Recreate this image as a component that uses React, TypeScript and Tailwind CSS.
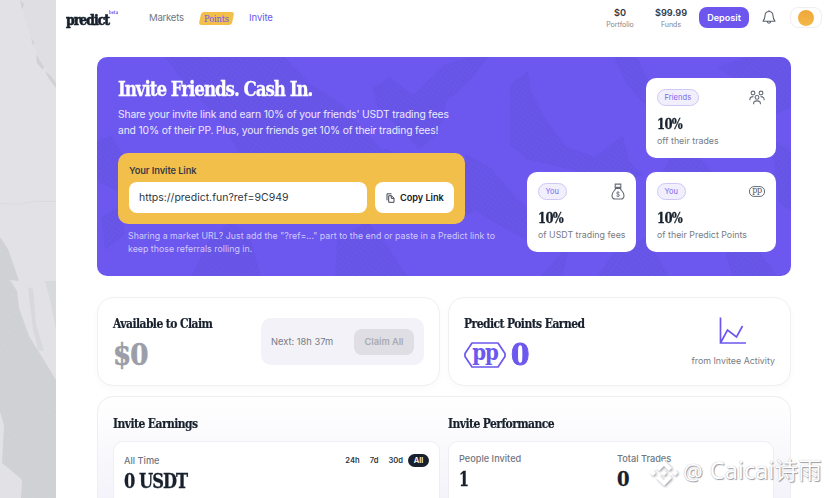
import type { ReactNode } from 'react'

const serif = "inline-block whitespace-nowrap font-bold font-['DejaVu_Serif','Liberation_Serif',serif] [font-stretch:condensed]"

function Logo() {
  return (
    <div className="relative w-[83px] h-[22px]">
      <span className={`${serif} block origin-left scale-x-[0.99] text-[14px] leading-[18px] tracking-[-1px] text-[#17202c] [-webkit-text-stroke:0.6px_#17202c]`}>
        predict
      </span>
      <span className={`${serif} absolute left-[43px] top-px origin-left scale-x-[0.85] text-[5px] leading-[8px] text-[#6c58ee]`}>
        beta
      </span>
    </div>
  )
}

function Header() {
  return (
    <header className="flex h-[57px] items-start pl-[10px] pr-[7px] pt-[7px]">
      <Logo />
      <nav className="flex h-[22px] items-center text-[9.6px] text-[#717680]">
        <span className="w-[51px] tracking-[-0.25px]">Markets</span>
        <span className="relative flex h-[13px] w-[33px] items-center justify-center">
          <span className="absolute inset-0 -skew-x-12 rounded-[3px] bg-[#f3bf4b]" />
          <span className={`${serif} relative text-[9.3px] font-normal leading-[13px] tracking-[-0.2px] text-[#6c58ee]`}>Points</span>
        </span>
        <span className="ml-[16px] tracking-[-0.1px] text-[#6c58ee]">Invite</span>
      </nav>
      <div className="ml-auto flex">
        <div className="w-[40px] text-center">
          <div className="text-[9.2px] font-semibold leading-[12px] text-[#303744]">$0</div>
          <div className="text-[7px] leading-[11px] text-[#81858d]">Portfolio</div>
        </div>
        <div className="ml-[11px] w-[40px] text-center">
          <div className="text-[9.2px] font-semibold leading-[12px] text-[#303744]">$99.99</div>
          <div className="text-[7px] leading-[11px] text-[#81858d]">Funds</div>
        </div>
        <button className="ml-[8px] h-[21px] w-[50px] rounded-[8px] bg-[#6c56ee] pt-px text-[9.1px] font-semibold text-white">
          Deposit
        </button>
        <svg className="ml-[13px] mt-[3px]" width="14" height="15" viewBox="0 0 14 15" fill="none" stroke="#5a606c" strokeWidth="1.1" strokeLinejoin="round" strokeLinecap="round">
          <path d="M7 1.5C4.5 1.5 3 3.4 3 5.7C3 8.2 2.3 9.3 1 11.2H13C11.7 9.3 11 8.2 11 5.7C11 3.4 9.5 1.5 7 1.5Z M5.3 11.3C5.3 13.8 8.7 13.8 8.7 11.3 M7 0.6V1.5" />
        </svg>
        <div className="ml-[14px] flex h-[21px] w-[32px] items-center justify-center rounded-[8px] border border-[#efeff2]">
          <span className="h-[16px] w-[16px] rounded-full bg-linear-to-b from-[#f0a63a] to-[#f3b947]" />
        </div>
      </div>
    </header>
  )
}

function FriendsIcon() {
  return (
    <svg width="16" height="15" viewBox="0 0 16 15" fill="none" stroke="#666c77" strokeWidth="1.1">
      <circle cx="4" cy="3" r="1.9" />
      <circle cx="12" cy="3" r="1.9" />
      <circle cx="8" cy="7.4" r="1.9" />
      <path d="M4.6 14.2V13.4C4.6 11.6 5.8 10.9 8 10.9S11.4 11.6 11.4 13.4V14.2 M0.9 10.2V9.2C0.9 7.4 2 6.6 4.4 6.6 M15.1 10.2V9.2C15.1 7.4 14 6.6 11.6 6.6" />
    </svg>
  )
}

function MoneyBagIcon() {
  return (
    <svg width="14" height="17" viewBox="0 0 14 17" fill="none" stroke="#666c77" strokeWidth="1.1">
      <path d="M4.2 1.1H9.8V4.2H4.2Z M3.8 5.4H10.2 M4.8 5.6C3.6 7.5 1 9.3 1 12.4C1 15.2 2.6 16 4.3 16H9.7C11.4 16 13 15.2 13 12.4C13 9.3 10.4 7.5 9.2 5.6" />
      <path d="M8.5 9.5C6.5 8.6 5.5 9.4 5.6 10.2C5.8 11.6 8.5 10.8 8.5 12.4C8.5 13.6 6.7 13.7 5.4 12.9 M7 8.3V14" strokeWidth="0.8" />
    </svg>
  )
}

function PointsIcon() {
  return (
    <span className="relative flex h-[11px] w-[16px] items-center justify-center">
      <svg className="absolute inset-0" width="16" height="11" viewBox="0 0 16 11" fill="none" stroke="#666c77">
        <rect x="0.5" y="0.6" width="15" height="9.8" rx="4.4" />
      </svg>
      <span className={`${serif} pb-[2px] text-[9px] font-normal leading-[9px] tracking-[-0.4px] text-[#4b515e]`}>pp</span>
    </span>
  )
}

function PerkCard({ who, label, icon, className }: { who: string; label: string; icon: ReactNode; className: string }) {
  return (
    <div className={`h-[80px] rounded-[10px] bg-white px-[11px] pt-[11px] ${className}`}>
      <div className="flex h-[17px] items-center justify-between">
        <span className="flex h-[17px] items-center rounded-full border border-[#cfc8f7] bg-[#f1effc] px-[6.5px] text-[7.5px] tracking-[0.05px] text-[#7766ec]">
          {who}
        </span>
        {icon}
      </div>
      <div className={`${serif} mt-[8px] block origin-left scale-x-[0.83] text-[15.5px] leading-[20px] tracking-[-0.8px] text-[#17202c] [-webkit-text-stroke:0.3px_#17202c]`}>10%</div>
      <div className="mt-[-1px] whitespace-nowrap text-[8.8px] leading-[13px] tracking-[0.02px] text-[#777b84]">{label}</div>
    </div>
  )
}

// Brushed halftone strokes behind the hero content
function HeroTexture() {
  return (
    <svg className="absolute inset-0" width="694" height="219" viewBox="0 0 694 219">
      <defs>
        <pattern id="weave" width="4" height="4" patternUnits="userSpaceOnUse" patternTransform="rotate(35)">
          <rect width="4" height="4" fill="#6755e5" />
          <circle cx="2" cy="2" r="1" fill="#604fd8" />
        </pattern>
      </defs>
      <g fill="url(#weave)" opacity="0.6">
        <path d="M68 0H188L212 26L246 48L267 73L288 96H142L122 62L90 30Z" />
        <path d="M276 31L292 20L316 38L347 8L372 0H392L372 24L350 44L340 79L322 92L280 50Z" />
        <path d="M205 83L252 92H292L348 145H368V96L395 112L420 141L450 168L428 183L378 154L346 168L290 160L238 132Z" />
        <path d="M413 28L431 14L434 34L448 62L470 90L498 100L526 78L532 104L546 118L520 126L470 112L430 102L413 88Z" />
        <path d="M517 0H540L556 33L549 50L528 25Z M620 10L649 0H694V50L674 60L648 30Z M674 80L694 94V155L682 146Z" />
        <path d="M0 84L14 78L30 104L21 134L0 125Z M4 160L22 150L28 177L8 193Z M112 184L134 164L153 179L164 219H94Z" />
        <path d="M240 184L270 164L291 190L310 219H238Z M500 219L516 196L550 180L572 219Z M628 195H662L681 219H635Z" />
        <path d="M573 102L598 96L616 115H565Z M456 205L473 185L466 219H444Z" />
      </g>
    </svg>
  )
}

function Hero() {
  return (
    <section className="relative h-[219px] overflow-hidden rounded-[10px] bg-[#6c58ef]">
      <HeroTexture />
      <div className="relative flex h-full justify-between pl-[21px] pr-[15px] pt-[21px]">
        <div className="w-[390px]">
          <h1 className={`${serif} block origin-left scale-x-[0.885] text-[21px] leading-[22px] tracking-[-1.2px] text-white [-webkit-text-stroke:0.3px_#fff]`}>
            Invite Friends. Cash In.
          </h1>
          <p className="mt-[5px] whitespace-nowrap text-[10.3px] leading-[15.5px] tracking-[-0.14px] text-[#ece9fd]">
            Share your invite link and earn 10% of your friends' USDT trading fees
            <br />
            and 10% of their PP. Plus, your friends get 10% of their trading fees!
          </p>
          <div className="mt-[15px] h-[71px] w-[347px] rounded-[10px] bg-[#f3bf4b] px-[11px] pt-[11px]">
            <div className="text-[9.3px] font-semibold leading-[13px] tracking-[-0.08px] text-[#3a3c42]">Your Invite Link</div>
            <div className="mt-[5px] flex gap-[8px]">
              <div className="flex h-[31px] w-[238px] items-center rounded-[8px] bg-white pl-[10px] text-[10.5px] text-[#303744]">
                https://predict.fun?ref=9C949
              </div>
              <button className="flex h-[31px] w-[79px] items-center rounded-[8px] bg-white pl-[11px] text-[9.2px] font-semibold tracking-[-0.05px] text-[#17202c]">
                <svg className="mr-[5px]" width="9" height="10" viewBox="0 0 9 10" fill="none" stroke="#303744" strokeWidth="0.9">
                  <path d="M2.7 2.7H5.5L8 5.2V9.3H2.7Z M5.3 2.8V5.4H8 M1 7.3V0.8H5.5" />
                </svg>
                Copy Link
              </button>
            </div>
          </div>
          <p className="ml-[10px] mt-[5px] whitespace-nowrap text-[8.8px] leading-[13px] tracking-[0.025px] text-[#d0c9fb]">
            Sharing a market URL? Just add the "?ref=..." part to the end or paste in a Predict link to
            <br />
            keep those referrals rolling in.
          </p>
        </div>
        <div className="grid h-[174px] grid-cols-[109px_130px] content-between gap-x-[10px]">
          <PerkCard className="col-start-2" who="Friends" label="off their trades" icon={<FriendsIcon />} />
          <PerkCard className="col-start-1" who="You" label="of USDT trading fees" icon={<MoneyBagIcon />} />
          <PerkCard className="col-start-2" who="You" label="of their Predict Points" icon={<PointsIcon />} />
        </div>
      </div>
    </section>
  )
}

function Heading({ children }: { children: ReactNode }) {
  return (
    <h2 className={`${serif} block origin-left scale-x-[0.935] text-[12.8px] leading-[18px] tracking-[-0.6px] text-[#17202c] [-webkit-text-stroke:0.2px_#17202c]`}>
      {children}
    </h2>
  )
}

function Summary() {
  return (
    <section className="mt-[21px] grid grid-cols-2 gap-[8px]">
      <div className="flex h-[89px] items-center justify-between rounded-[16px] border border-[#f0f0f3] bg-white pl-[15px] pr-[15px] shadow-[0_3px_8px_rgba(0,0,0,0.025)]">
        <div className="w-[130px] pt-px">
          <Heading>Available to Claim</Heading>
          <div className={`${serif} mt-[2px] block origin-left text-[29px] leading-[38px] tracking-[-1px] text-[#9b9ea8] [-webkit-text-stroke:0.6px_#9b9ea8]`}>$0</div>
        </div>
        <div className="flex h-[47px] w-[163px] items-center justify-between rounded-[10px] bg-[#f3f2f9] pl-[10px] pr-[10px]">
          <span className="text-[9.3px] text-[#777b84]">Next: 18h 37m</span>
          <span className="flex h-[26px] w-[60px] items-center justify-center rounded-[8px] bg-[#dfdee4] text-[9.2px] font-semibold text-[#a9aab1]">
            Claim All
          </span>
        </div>
      </div>
      <div className="flex h-[89px] items-center justify-between rounded-[16px] border border-[#f0f0f3] bg-white pl-[15px] pr-[15px] shadow-[0_3px_8px_rgba(0,0,0,0.025)]">
        <div className="w-[150px] pt-px">
          <Heading>Predict Points Earned</Heading>
          <div className="mt-[2px] flex h-[38px] items-center text-[#6c58ee]">
            <span className="relative flex h-[26px] w-[42px] items-center justify-center">
              <svg className="absolute inset-0" width="42" height="26" viewBox="0 0 42 26" fill="none" stroke="#6c58ee" strokeWidth="1.7">
                <path d="M8 1H34L41 11.5V14.5L34 25H8L1 14.5V11.5Z" strokeLinejoin="round" />
              </svg>
              <span className={`${serif} pb-[6px] text-[22px] leading-[20px] tracking-[-1.2px]`}>pp</span>
            </span>
            <span className={`${serif} ml-[5px] origin-left scale-x-[0.98] text-[30px] leading-[38px] [-webkit-text-stroke:1px_#6c58ee]`}>0</span>
          </div>
        </div>
        <div className="flex flex-col items-center">
          <svg width="28" height="28" viewBox="0 0 28 28" fill="none" stroke="#6c58ee" strokeWidth="1.7">
            <path d="M1.5 0.5V26H27 M2 25L8.5 13L17.5 20L23.5 9" />
          </svg>
          <span className="mt-[10px] text-[8.85px] leading-[12px] text-[#777b84]">from Invitee Activity</span>
        </div>
      </div>
    </section>
  )
}

function Activity() {
  return (
    <section className="mt-[10px] grid h-[140px] grid-cols-[327px_326px] gap-[8px] rounded-t-[16px] border border-[#ededf2] bg-linear-to-b from-white to-[#f0eff8] pl-[15px] pt-[13px]">
      <div>
        <Heading>Invite Earnings</Heading>
        <div className="mt-[7px] h-[90px] rounded-[10px] border border-[#efeff3] bg-white px-[10px] pt-[12px]">
          <div className="flex items-center justify-between">
            <span className="text-[9.2px] font-medium leading-[13px] text-[#717680]">All Time</span>
            <div className="flex items-center text-[7.6px] font-semibold text-[#303744]">
              <span>24h</span>
              <span className="ml-[10px]">7d</span>
              <span className="ml-[10px]">30d</span>
              <span className="ml-[5px] flex h-[13px] w-[21px] items-center justify-center rounded-full bg-[#17202c] text-white">All</span>
            </div>
          </div>
          <div className={`${serif} block origin-left scale-x-[0.88] text-[20.5px] leading-[28px] tracking-[-1.1px] text-[#17202c] [-webkit-text-stroke:0.3px_#17202c]`}>0 USDT</div>
        </div>
      </div>
      <div>
        <Heading>Invite Performance</Heading>
        <div className="mt-[7px] grid h-[90px] grid-cols-[158px_1fr] rounded-[10px] border border-[#efeff3] bg-white px-[10px] pt-[10px]">
          <div>
            <div className="text-[9.2px] font-medium leading-[14px] text-[#717680]">People Invited</div>
            <div className={`${serif} block origin-left scale-x-[0.8] text-[20px] leading-[26px] text-[#17202c] [-webkit-text-stroke:0.3px_#17202c]`}>1</div>
          </div>
          <div>
            <div className="text-[9.2px] font-medium leading-[14px] text-[#717680]">Total Trades</div>
            <div className={`${serif} block origin-left text-[20px] leading-[26px] text-[#17202c] [-webkit-text-stroke:0.3px_#17202c]`}>0</div>
          </div>
        </div>
      </div>
    </section>
  )
}

function SidePoster() {
  return (
    <svg width="56" height="498" viewBox="0 0 56 498">
      <defs>
        <pattern id="grain" width="7" height="7" patternUnits="userSpaceOnUse" patternTransform="rotate(25)">
          <rect width="7" height="7" fill="#d0d1d5" />
          <circle cx="2" cy="3" r="0.6" fill="#dadbde" />
        </pattern>
      </defs>
      <rect width="56" height="498" fill="#e1e1e6" />
      <path d="M20 0H56V86L50 78L46 68L39 62L36 50L31 39L25 18Z" fill="#dfdfe3" />
      <path d="M20 0L24 4L22 10Z M31 38L34 42L33 46Z M36 54L40 61L44 67L43 70L37 63Z M45 71L50 75L56 83V88L49 79Z" fill="#d0d1d5" />
      <path d="M0 203.5L20 204L34 201.5H56" stroke="#d8d8dd" fill="none" strokeWidth="0.8" />
      <path d="M0 237L8 249L14 266L19 281L10 280L17 291L19 308L29 336L42 357L56 380V498H21L22 480L13 472L2 463L4 425L0 412Z" fill="url(#grain)" />
      <path d="M28 287L33 289L36 324L44 351L38 350L33 329Z M45 281L56 281V330L50 300Z" fill="#d8d9dd" />
    </svg>
  )
}

function Watermark() {
  return (
    <div className="absolute left-[650px] top-[454px] flex h-[34px] items-center whitespace-nowrap font-['Noto_Sans','Noto_Sans_CJK_SC',sans-serif] text-[23.5px] text-white [text-shadow:1px_1px_1px_#9a9aa2,0_0_1px_#a8a8b0]">
      <svg className="mt-[4px] drop-shadow-[1px_1px_1px_#9a9aa2]" width="28" height="28" viewBox="0 0 28 28" fill="#fff">
        <path d="M14 1L22 9L19 12L14 7L9 12L6 9Z M14 27L22 19L19 16L14 21L9 16L6 19Z M3 11L6 14L3 17L0 14Z M25 11L28 14L25 17L22 14Z M14 11L17 14L14 17L11 14Z" />
      </svg>
      <span className="ml-[5px] text-[22px]">@</span>
      <span className="ml-[7px]">Caicai诗雨</span>
    </div>
  )
}

export default function App() {
  return (
    <div className="relative flex h-[498px] w-[829px] overflow-hidden bg-white font-['Inter','Liberation_Sans',sans-serif]">
      <SidePoster />
      <div className="min-w-0 flex-1">
        <Header />
        <main className="ml-[41px] w-[694px]">
          <Hero />
          <Summary />
          <Activity />
        </main>
      </div>
      <Watermark />
    </div>
  )
}
